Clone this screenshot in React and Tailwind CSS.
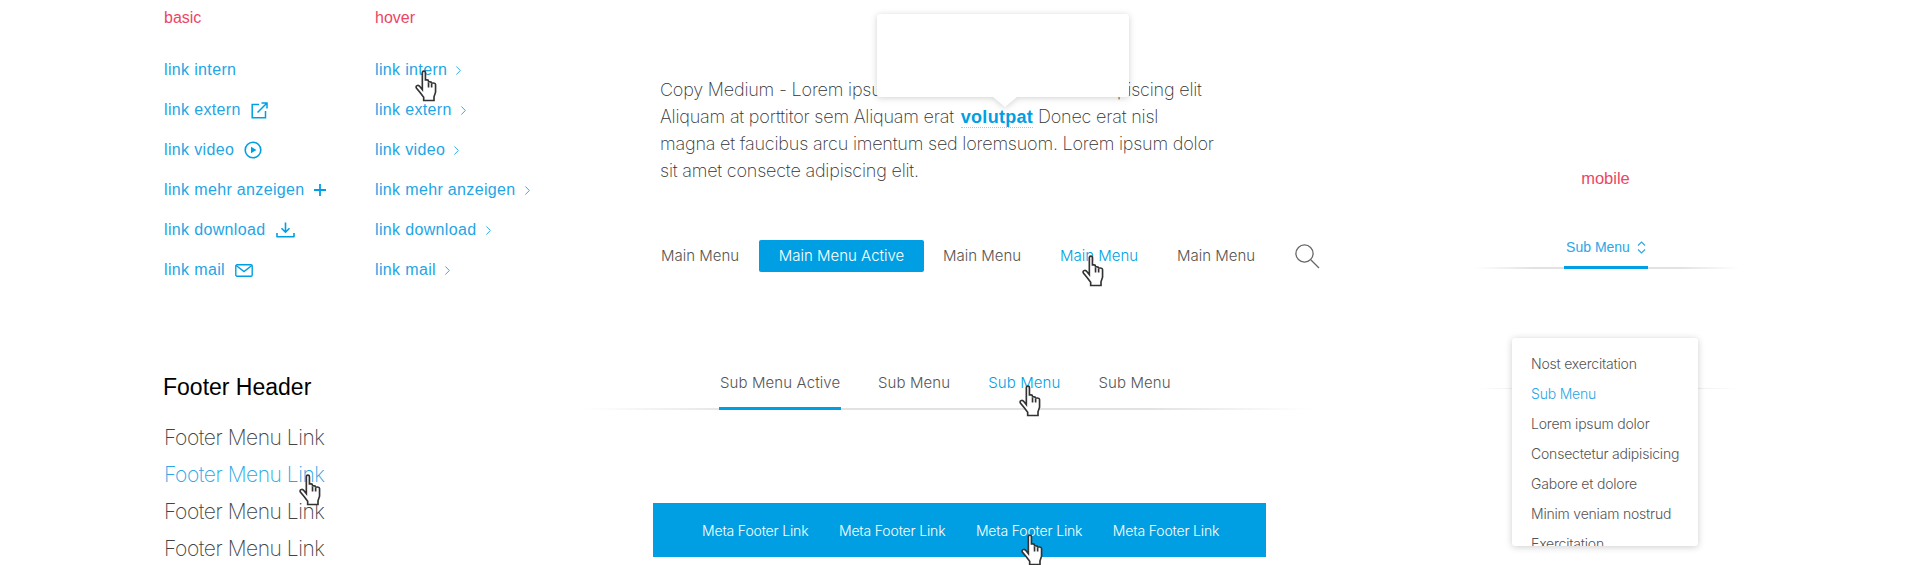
import { ChevronRight } from "lucide-react";

const basicLinks = [
  { label: "link intern" },
  { label: "link extern", icon: <ExternIcon /> },
  { label: "link video", icon: <VideoIcon /> },
  { label: "link mehr anzeigen", icon: <PlusIcon /> },
  { label: "link download", icon: <DownloadIcon /> },
  { label: "link mail", icon: <MailIcon /> },
];

const dropdownItems = [
  "Nost exercitation",
  "Sub Menu",
  "Lorem ipsum dolor",
  "Consectetur adipisicing",
  "Gabore et dolore",
  "Minim veniam nostrud",
  "Exercitation",
];

function ExternIcon() {
  return (
    <svg width="17" height="17" viewBox="0 0 17 17" fill="none" stroke="#009fe3" strokeWidth="1.5">
      <path d="M8 2.5H1.2V15.8H14.5V9" />
      <path d="M6.5 10.5L15.5 1.5M10.5 1H16V6.5" />
    </svg>
  );
}

function VideoIcon() {
  return (
    <svg width="18" height="18" viewBox="0 0 18 18" fill="none">
      <circle cx="9" cy="9" r="7.8" stroke="#009fe3" strokeWidth="1.6" />
      <path d="M7 5.8L12.4 9L7 12.2Z" fill="#009fe3" />
    </svg>
  );
}

function PlusIcon() {
  return (
    <svg className="-ml-[2px]" width="14" height="14" viewBox="0 0 14 14" fill="none" stroke="#009fe3" strokeWidth="1.8">
      <path d="M7 1V13M1 7H13" />
    </svg>
  );
}

function DownloadIcon() {
  return (
    <svg width="19" height="16" viewBox="0 0 19 16" fill="none" stroke="#009fe3" strokeWidth="1.6">
      <path d="M9.5 0.5V10M5.5 6.2L9.5 10.2L13.5 6.2" />
      <path d="M1 11V14.8H18V11" strokeLinejoin="round" />
    </svg>
  );
}

function MailIcon() {
  return (
    <svg width="18" height="13" viewBox="0 0 18 13" fill="none" stroke="#009fe3" strokeWidth="1.4">
      <rect x="0.8" y="0.8" width="16.4" height="11.4" rx="1.2" />
      <path d="M1.2 1.5L9 7.5L16.8 1.5" />
    </svg>
  );
}

function SearchIcon() {
  return (
    <svg width="26" height="26" viewBox="0 0 26 26" fill="none" stroke="#666" strokeWidth="1.3">
      <circle cx="10.5" cy="10.5" r="8.6" />
      <path d="M17 17L25 25" />
    </svg>
  );
}

function UpDownIcon() {
  return (
    <svg width="9" height="13" viewBox="0 0 9 13" fill="none" stroke="#2ba6e6" strokeWidth="1.1">
      <path d="M1 4.5L4.5 1L8 4.5M1 8.5L4.5 12L8 8.5" />
    </svg>
  );
}

// cursor that shows the hover state
function Hand({ className }) {
  return (
    <svg className={className} width="25" height="32" viewBox="0 0 24 31" fill="white" stroke="#333" strokeWidth="1.6">
      <path d="M7 2.5C7 .7 10 .7 10 2.5V10.5C10 9.2 13 9.2 13 10.8V12.2C13 11 16 11 16 12.6V13.4C16 12.2 19.8 12.2 19.8 14V21.5L18.3 26V29.5H8.3V26.5L5 22L1.2 17.5C0 15.4 3 13.8 4.6 16L7 19Z" />
      <path d="M13 12.2V17M16 13.4V17" fill="none" />
    </svg>
  );
}

function LinkRow({ label, children, hand }) {
  return (
    <div className="relative flex h-[40px] items-center gap-[10px] text-[16px] tracking-[0.35px] text-[#1fa5e6] whitespace-nowrap">
      <span>{label}</span>
      {children}
      {hand && <Hand className="absolute left-[40px] top-[20px]" />}
    </div>
  );
}

export default function App() {
  return (
    <div className="flex h-[565px] w-[1920px] overflow-hidden bg-white font-['Liberation_Sans',Arial,sans-serif]">
      {/* links + footer */}
      <div className="w-[585px] shrink-0 pl-[164px] pt-[8px]">
        <div className="flex">
          <div className="w-[211px]">
            <div className="h-[20px] text-[16px] leading-[20px] text-[#ec4565]">basic</div>
            <div className="mt-[22px]">
              {basicLinks.map((l) => (
                <LinkRow key={l.label} label={l.label}>
                  {l.icon}
                </LinkRow>
              ))}
            </div>
          </div>
          <div>
            <div className="h-[20px] text-[16px] leading-[20px] text-[#ec4565]">hover</div>
            <div className="mt-[22px]">
              {basicLinks.map((l, i) => (
                <LinkRow key={l.label} label={l.label} hand={i === 0}>
                  <ChevronRight className="-ml-[6px]" size={15} strokeWidth={1.5} color="#1fa5e6" />
                </LinkRow>
              ))}
            </div>
          </div>
        </div>
        <div className="-ml-px mt-[82px] h-[30px] text-[23px] leading-[30px] text-black">Footer Header</div>
        <div className="mt-[17px] font-[Inter,sans-serif] text-[21px] font-extralight leading-[37px] tracking-[-0.45px] text-[#444]">
          <div>Footer Menu Link</div>
          <div className="relative text-[#2ba6e6]">
            Footer Menu Link
            <Hand className="absolute left-[135px] top-[18px]" />
          </div>
          <div>Footer Menu Link</div>
          <div>Footer Menu Link</div>
        </div>
      </div>

      {/* copy + navigation */}
      <div className="w-[725px] shrink-0 pt-[76px]">
        <div className="relative ml-[75px] w-[560px] font-[Inter,sans-serif] text-[18px] font-extralight leading-[27px] tracking-[-0.2px] text-[#333]">
          <p>
            Copy Medium - Lorem ipsum dolor sit amet consecte adipiscing elit
            <br />
            Aliquam at porttitor sem Aliquam erat{" "}
            <span className="ml-[2px] border-b border-dotted border-[#9ccfe8] font-['Liberation_Sans',sans-serif] font-bold leading-[20px] tracking-[0.3px] text-[#009fe3]">
              volutpat
            </span>{" "}
            Donec erat nisl
            <br />
            magna et faucibus arcu imentum sed loremsuom. Lorem ipsum dolor
            <br />
            sit amet consecte adipiscing elit.
          </p>
          <div className="absolute left-[217px] top-[-62px] h-[83px] w-[252px] rounded-[3px] bg-white drop-shadow-[0_1px_3px_rgba(0,0,0,0.18)]">
            <div className="absolute left-[116px] top-full h-0 w-0 border-x-[12px] border-t-[10px] border-x-transparent border-t-white" />
          </div>
        </div>

        <div className="mt-[56px] ml-[76px] flex h-[32px] w-max items-center font-[Inter,sans-serif] text-[15px] font-light text-[#555]">
          <span className="w-[98px]">Main Menu</span>
          <span className="flex h-[32px] w-[165px] items-center justify-center rounded-[2px] bg-[#009fe3] text-white">
            Main Menu Active
          </span>
          <span className="ml-[19px] w-[117px]">Main Menu</span>
          <span className="relative w-[117px] text-[#009fe3]">
            Main Menu
            <Hand className="absolute left-[22px] top-[10px]" />
          </span>
          <span className="w-[117px]">Main Menu</span>
          <SearchIcon />
        </div>

        <div className="mt-[98px] pl-[134px]">
          <div className="flex h-[40px] w-max font-[Inter,sans-serif] text-[15px] font-light tracking-[0.1px] text-[#555]">
            <span className="mr-[37px] h-[40px] w-[122px] border-b-[3px] border-[#009fe3] pt-[2px] pl-[1px]">Sub Menu Active</span>
            <span className="mr-[38px] pt-[2px]">Sub Menu</span>
            <span className="relative mr-[38px] pt-[2px] text-[#009fe3]">
              Sub Menu
              <Hand className="absolute left-[31px] top-[15px]" />
            </span>
            <span className="pt-[2px]">Sub Menu</span>
          </div>
        </div>
        <div className="-mt-[2px] h-[2px] bg-[linear-gradient(90deg,transparent,#e2e2e2_22%,#e2e2e2_78%,transparent)]" />

        <div className="mt-[93px] ml-[68px] flex h-[54px] w-[613px] items-center gap-[30.5px] bg-[#009fe3] pl-[49px] font-[Inter,sans-serif] text-[14px] font-light tracking-[-0.15px] text-white">
          <span>Meta Footer Link</span>
          <span>Meta Footer Link</span>
          <span className="relative">
            Meta Footer Link
            <Hand className="absolute left-[45px] top-[14px]" />
          </span>
          <span>Meta Footer Link</span>
        </div>
      </div>

      {/* mobile */}
      <div className="relative ml-[165px] w-[264px] shrink-0 pt-[168px]">
        <div className="h-[20px] pr-[3px] text-center text-[16.5px] leading-[20px] text-[#ec4565]">mobile</div>
        <div className="mt-[42px] flex justify-center pr-[2px]">
          <div className="flex h-[39px] w-[84px] items-start justify-center gap-[7px] border-b-[3px] border-[#009fe3] pt-[9px] text-[14px] leading-[16px] text-[#2ba6e6]">
            <span>Sub Menu</span>
            <span className="pt-[2px]">
              <UpDownIcon />
            </span>
          </div>
        </div>
        <div className="-mt-[2px] h-[2px] bg-[linear-gradient(90deg,transparent,#e2e2e2_22%,#e2e2e2_78%,transparent)]" />
        <div className="mt-[119px] h-[1px] bg-[linear-gradient(90deg,transparent,#e6e6e6_25%,#e6e6e6_75%,transparent)]" />
        <div className="absolute left-[37px] top-[338px] h-[208px] w-[186px] overflow-hidden rounded-[3px] bg-white py-[11px] pl-[19px] font-[Inter,sans-serif] text-[14px] font-light leading-[30px] tracking-[-0.2px] text-[#555] shadow-[0_1px_7px_rgba(0,0,0,0.2)]">
          {dropdownItems.map((item) => (
            <div key={item} className={item === "Sub Menu" ? "text-[#2ba6e6]" : ""}>
              {item}
            </div>
          ))}
        </div>
      </div>
    </div>
  );
}
